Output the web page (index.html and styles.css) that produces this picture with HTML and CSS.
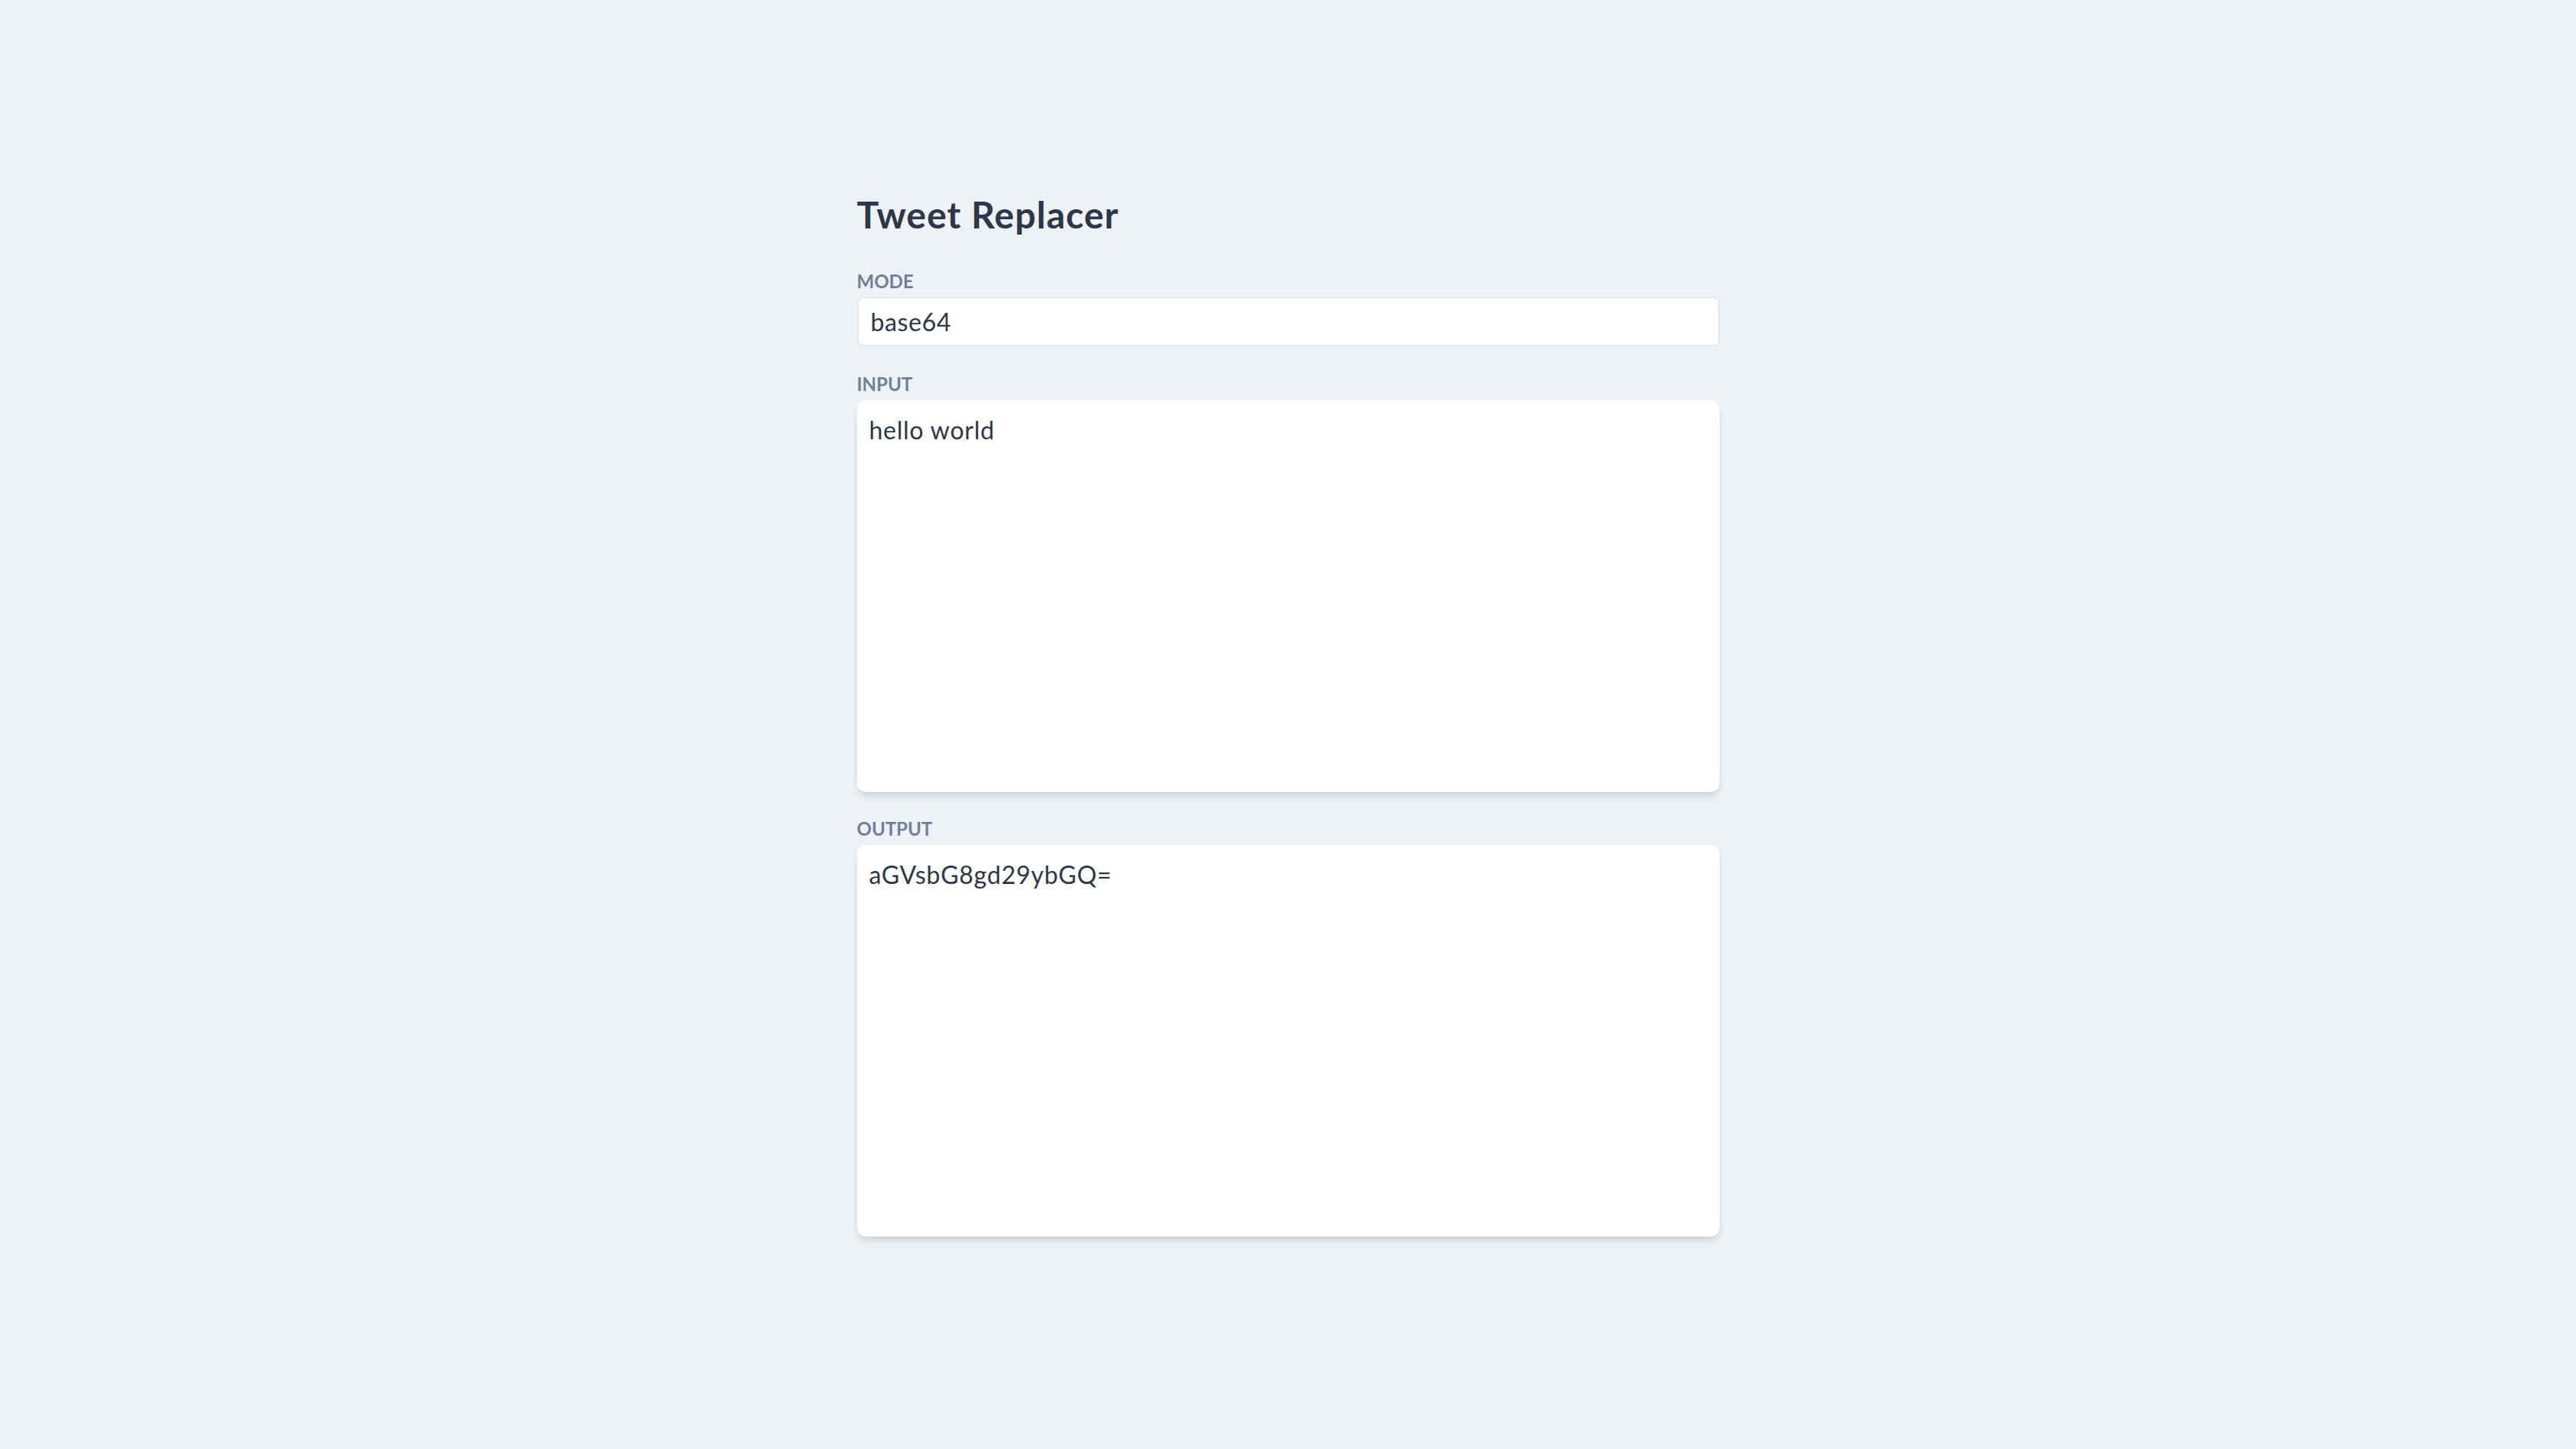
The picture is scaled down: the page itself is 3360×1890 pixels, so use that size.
FILE: index.html
```html
<!DOCTYPE html>
<html lang="en">
<head>
<meta charset="utf-8">
<title>Tweet Replacer</title>
<link rel="stylesheet" href="styles.css">
</head>
<body>
<main class="page">
  <h1 class="title">Tweet Replacer</h1>
  <div class="field">
    <label class="label" for="mode">Mode</label>
    <input class="select" id="mode" type="text" value="base64" readonly>
  </div>
  <div class="field">
    <label class="label" for="input">Input</label>
    <textarea class="area" id="input">hello world</textarea>
  </div>
  <div class="field">
    <label class="label" for="output">Output</label>
    <textarea class="area" id="output" readonly>aGVsbG8gd29ybGQ=</textarea>
  </div>
</main>
</body>
</html>
```

FILE: styles.css
```css
html, body {
  margin: 0;
  padding: 0;
  background: #edf2f7;
}
body {
  font-family: Lato, "Noto Sans", sans-serif;
  color: #2d3748;
}
.page {
  width: 1125px;
  margin: 0 auto;
  padding-top: 251px;
  box-sizing: border-box;
}
.title {
  margin: 0 0 44px 0;
  font-size: 48px;
  line-height: 57.6px;
  font-weight: 700;
  letter-spacing: 1px;
  color: #2d3748;
}
.field {
  display: flex;
  flex-direction: column;
  margin-bottom: 34.5px;
}
.label {
  display: block;
  font-size: 24px;
  line-height: 28.8px;
  font-weight: 700;
  text-transform: uppercase;
  color: #718096;
  margin-bottom: 6px;
}
.select {
  display: block;
  box-sizing: border-box;
  width: 100%;
  height: 65px;
  margin: 0;
  padding: 0 16px;
  border: 2px solid #e2e8f0;
  border-radius: 8px;
  background: #ffffff;
  font-family: Lato, "Noto Sans", sans-serif;
  font-size: 32px;
  letter-spacing: 0.6px;
  color: #2d3748;
  outline: none;
}
.area {
  display: block;
  box-sizing: border-box;
  width: 100%;
  height: 511px;
  margin: 0;
  padding: 15px 16px;
  border: none;
  border-radius: 12px;
  background: #ffffff;
  box-shadow: 0 8px 12px -2px rgba(0, 0, 0, 0.1), 0 4px 8px -2px rgba(0, 0, 0, 0.06);
  font-family: Lato, "Noto Sans", sans-serif;
  font-size: 32px;
  line-height: 48px;
  letter-spacing: 0.75px;
  color: #2d3748;
  resize: none;
  outline: none;
}
```
